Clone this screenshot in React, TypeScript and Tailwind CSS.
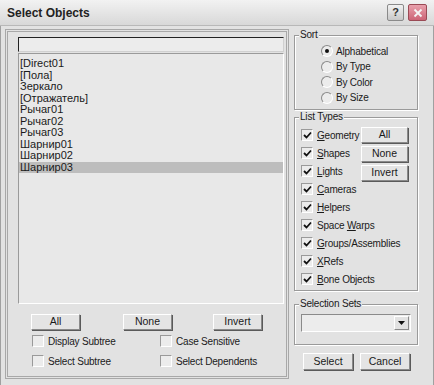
import React from 'react';

const items = [
  '[Direct01',
  '[Пола]',
  'Зеркало',
  '[Отражатель]',
  'Рычаг01',
  'Рычаг02',
  'Рычаг03',
  'Шарнир01',
  'Шарнир02',
  'Шарнир03',
];

// [before, underlined letter, after]
const listTypes: [string, string, string][] = [
  ['', 'G', 'eometry'],
  ['', 'S', 'hapes'],
  ['', 'L', 'ights'],
  ['', 'C', 'ameras'],
  ['', 'H', 'elpers'],
  ['Space ', 'W', 'arps'],
  ['', 'G', 'roups/Assemblies'],
  ['', 'X', 'Refs'],
  ['', 'B', 'one Objects'],
];

const Btn: React.FC<{ label: string; className?: string }> = ({ label, className }) => (
  <div
    className={`h-[16px] flex items-center justify-center bg-[#e4e4e4] border border-t-white border-l-white border-r-[#8a8a8a] border-b-[#8a8a8a] shadow-[1px_1px_0_#5a5a5a] text-[10.5px] text-[#1a1a1a] ${className ?? ''}`}
  >
    {label}
  </div>
);

const Check: React.FC<{ checked?: boolean }> = ({ checked }) => (
  <span className="w-[12px] h-[12px] shrink-0 flex items-center justify-center bg-[#ececec] border border-t-[#9a9a9a] border-l-[#9a9a9a] border-r-white border-b-white">
    {checked && (
      <svg width="9" height="9" viewBox="0 0 9 9">
        <path d="M1 4 L3.5 6.5 L8 1.5" stroke="#111" strokeWidth="1.8" fill="none" />
      </svg>
    )}
  </span>
);

const Radio: React.FC<{ on?: boolean }> = ({ on }) => (
  <span className="w-[12px] h-[12px] shrink-0 rounded-full bg-[#ececec] border border-t-[#8a8a8a] border-l-[#8a8a8a] border-r-white border-b-white flex items-center justify-center">
    {on && <span className="w-[4px] h-[4px] rounded-full bg-[#111]" />}
  </span>
);

const Group: React.FC<{ title: string; className?: string; children: React.ReactNode }> = ({ title, className, children }) => (
  <div className={`relative border border-[#9a9a9a] shadow-[inset_1px_1px_0_#fff,1px_1px_0_#fff] ${className ?? ''}`}>
    <span className="absolute -top-[7px] left-[4px] px-[1px] bg-[#e2e2e2] text-[10px] leading-[12px] tracking-[-0.2px] text-[#1a1a1a]">{title}</span>
    {children}
  </div>
);

export default function App() {
  return (
    <div
      className="w-[434px] h-[385px] bg-[#e2e2e2] flex flex-col overflow-hidden text-[#1a1a1a]"
      style={{ fontFamily: '"Liberation Sans", Arial, sans-serif' }}
    >
      {/* Title bar */}
      <div className="h-[26px] shrink-0 flex items-center px-[7px] bg-gradient-to-b from-[#f2f2f2] to-[#d8d8d8] border-b border-[#b8b8b8]">
        <span className="text-[12px] font-bold text-[#222]">Select Objects</span>
        <div className="ml-auto flex gap-[4px]">
          <div className="w-[17px] h-[17px] bg-gradient-to-b from-[#f2f2f2] to-[#c8c8c8] border border-[#8a8a8a] rounded-[2px] flex items-center justify-center text-[11px] font-bold text-[#333]">
            ?
          </div>
          <div className="w-[19px] h-[17px] bg-gradient-to-b from-[#e8a0ac] to-[#cc6476] border border-[#9a4a55] rounded-[2px] flex items-center justify-center">
            <svg width="10" height="10" viewBox="0 0 10 10">
              <path d="M1.5 1.5 L8.5 8.5 M8.5 1.5 L1.5 8.5" stroke="#f4f4f4" strokeWidth="1.8" />
            </svg>
          </div>
        </div>
      </div>

      {/* Body */}
      <div className="flex-1 flex pt-[3px] pl-[4px] border-l border-r border-[#a0a0a0]">
        {/* Left panel */}
        <div className="w-[284px] h-[350px] border-[3px] border-double border-[#a8a8a8] flex flex-col px-[10px] pt-[5px]">
          <div className="h-[15px] w-[266px] bg-[#ececec] border border-t-[#222] border-l-[#222] border-r-[#d0d0d0] border-b-[#d0d0d0]" />
          <div className="mt-[1px] h-[251px] w-[266px] bg-[#e8e8e8] border border-t-[#9a9a9a] border-l-[#9a9a9a] border-r-white border-b-white pt-[4px] flex flex-col">
            {items.map((it, i) => (
              <div
                key={i}
                className={`h-[11.5px] leading-[11.5px] text-[11px] pl-[1px] ${i === items.length - 1 ? 'bg-[#bdbdbd]' : ''}`}
              >
                {it}
              </div>
            ))}
          </div>
          <div className="flex mt-[10px] pl-[13px]">
            <Btn label="All" className="w-[49px]" />
            <Btn label="None" className="w-[49px] ml-[43px]" />
            <Btn label="Invert" className="w-[49px] ml-[41px]" />
          </div>
          <div className="flex mt-[5px] pl-[14px] text-[10px] tracking-[-0.2px]">
            <div className="w-[128px] flex flex-col gap-[8px]">
              <label className="flex items-center gap-[4px] h-[12px]">
                <Check /> <span>Display Subtree</span>
              </label>
              <label className="flex items-center gap-[4px] h-[12px]">
                <Check /> <span>Select Subtree</span>
              </label>
            </div>
            <div className="flex flex-col gap-[8px]">
              <label className="flex items-center gap-[4px] h-[12px]">
                <Check /> <span>Case Sensitive</span>
              </label>
              <label className="flex items-center gap-[4px] h-[12px]">
                <Check /> <span>Select Dependents</span>
              </label>
            </div>
          </div>
        </div>

        {/* Right panel */}
        <div className="flex flex-col pl-[5px] pt-[6px] w-[130px] text-[10px] tracking-[-0.2px]">
          <Group title="Sort" className="h-[75px] w-[124px]">
            <div className="flex flex-col gap-[3px] pl-[26px] pt-[9px]">
              {['Alphabetical', 'By Type', 'By Color', 'By Size'].map((s, i) => (
                <label key={s} className="flex items-center gap-[3px] h-[12.5px]">
                  <Radio on={i === 0} /> <span>{s}</span>
                </label>
              ))}
            </div>
          </Group>

          <Group title="List Types" className="mt-[7px] h-[174px] w-[124px]">
            <div className="flex pt-[11px] pl-[6px]">
              <div className="flex flex-col gap-[6px]">
                {listTypes.map(([a, u, b], i) => (
                  <label key={i} className="flex items-center gap-[4px] h-[12px] whitespace-nowrap">
                    <Check checked />
                    <span>
                      {a}
                      <span className="underline">{u}</span>
                      {b}
                    </span>
                  </label>
                ))}
              </div>
              <div className="absolute left-[66px] top-[9px] flex flex-col gap-[3px] tracking-normal">
                <Btn label="All" className="w-[47px] h-[15px]" />
                <Btn label="None" className="w-[47px] h-[15px]" />
                <Btn label="Invert" className="w-[47px] h-[15px]" />
              </div>
            </div>
          </Group>

          <Group title="Selection Sets" className="mt-[13px] h-[41px] w-[124px]">
            <div className="mt-[9px] ml-[6px] w-[110px] h-[18px] bg-[#ececec] border border-t-[#8a8a8a] border-l-[#8a8a8a] border-r-white border-b-white flex justify-end p-[1px]">
              <div className="w-[15px] h-full bg-[#e2e2e2] border border-t-white border-l-white border-r-[#8a8a8a] border-b-[#8a8a8a] flex items-center justify-center">
                <svg width="7" height="4" viewBox="0 0 7 4">
                  <path d="M0 0 H7 L3.5 4 Z" fill="#111" />
                </svg>
              </div>
            </div>
          </Group>

          <div className="flex mt-[8px] pl-[9px] gap-[7px] tracking-normal">
            <Btn label="Select" className="w-[50px] h-[17px]" />
            <Btn label="Cancel" className="w-[50px] h-[17px]" />
          </div>
        </div>
      </div>
    </div>
  );
}
